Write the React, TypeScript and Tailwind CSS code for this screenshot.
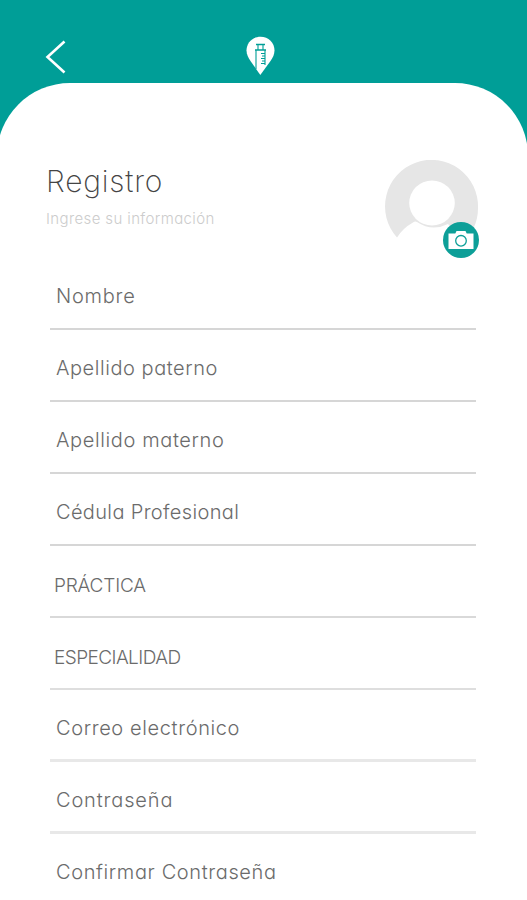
import clsx from "clsx";

type Field = {
  label: string;
  text: string;
  line: string;
};

const fields: Field[] = [
  { label: "Nombre", text: "pl-1.5 pt-[5px] text-[20px] tracking-[0.75px]", line: "border-b-2 border-[#d6d6d6]" },
  { label: "Apellido paterno", text: "pl-1.5 pt-[5px] text-[20px] tracking-[0.55px]", line: "border-b-2 border-[#d6d6d6]" },
  { label: "Apellido materno", text: "pl-1.5 pt-[5px] text-[20px] tracking-[0.62px]", line: "border-b-2 border-[#d6d6d6]" },
  { label: "Cédula Profesional", text: "pl-1.5 pt-[5px] text-[20px] tracking-[0.35px]", line: "border-b-2 border-[#d6d6d6]" },
  { label: "PRÁCTICA", text: "pl-1 pt-[9px] text-[19px] tracking-[-0.2px]", line: "border-b-2 border-[#d9d9d9]" },
  { label: "ESPECIALIDAD", text: "pl-1 pt-[9px] text-[19px] tracking-[-0.58px]", line: "border-b-2 border-[#dedede]" },
  { label: "Correo electrónico", text: "pl-1.5 pt-[7px] text-[20px] tracking-[0.62px]", line: "border-b-3 border-[#e8e8e8]" },
  { label: "Contraseña", text: "pl-1.5 pt-[7px] text-[20px] tracking-[0.85px]", line: "border-b-3 border-[#e8e8e8]" },
  { label: "Confirmar Contraseña", text: "pl-1.5 pt-[7px] text-[20px] tracking-[0.62px]", line: "border-b-3 border-transparent" },
];

function BackIcon() {
  return (
    <svg className="w-6 h-9" viewBox="0 0 24 36" fill="none" stroke="white" strokeWidth="2.6">
      <path d="M20.500 2.500 3.500 18l17 15.500" />
    </svg>
  );
}

function PinLogo() {
  return (
    <svg className="w-[30px] h-10" viewBox="0 0 30 40" fill="none">
      <path d="M15.500 .8C7.500 .8 1.500 6.800 1.500 14.500c0 4 1.800 7 4 10.500L15.300 39 25.500 25c2.300-3.500 4-6.500 4-10.500C29.500 6.800 23.500 .8 15.500 .8Z" fill="white" />
      <g stroke="#009e97">
        <path d="M11 8.500h9M10 14h11" strokeWidth="1.300" />
        <path d="M13 9v5M18 9v5M11 14v19M20 14v15" strokeWidth="1.100" />
        <path d="M16 17.500h4M17 20h3M16 22.500h4M17 25h3M16 27.500h4" strokeWidth="1" />
      </g>
    </svg>
  );
}

function Avatar() {
  return (
    <div className="relative w-24 h-[100px]">
      <svg className="w-24 h-[100px]" viewBox="0 0 96 100">
        <path
          d="M13 77.500A46.500 46.500 0 1 1 94 48c0 15-6 26-16 34L64 64q-16 8-31-2-2-1-4 .5Q19 68 13 77.500Z"
          fill="#e6e6e6"
        />
        <ellipse cx="48" cy="43" rx="22.800" ry="22.500" fill="white" />
      </svg>
      <button className="absolute left-[58.500px] top-[62px] w-9 h-9 rounded-full bg-[#0d9f98] flex items-center justify-center">
        <svg className="w-[26px] h-5" viewBox="0 0 26 20" fill="none">
          <path d="M.5 3.500h6.800l1.200-2.500h9l1.200 2.500h6.800v15.500H.5Z" fill="white" />
          <circle cx="13" cy="10.800" r="5.300" stroke="#0d9f98" strokeWidth="1.300" />
        </svg>
      </button>
    </div>
  );
}

function FieldRow({ field }: { field: Field }) {
  return (
    <label className={clsx("flex items-center h-[72px]", field.text, field.line)}>
      <span className="whitespace-nowrap leading-6 font-light text-[#6b6b6b]">{field.label}</span>
    </label>
  );
}

export default function App() {
  return (
    <div className="h-[900px] overflow-hidden bg-[#009e97] font-['Inter',sans-serif] [font-feature-settings:'cv11']">
      <header className="grid grid-cols-3 h-[83px] pt-9">
        <button className="w-fit h-fit pl-[43.500px] pt-[2.500px]">
          <BackIcon />
        </button>
        <div className="flex justify-center items-start pr-[6px]">
          <PinLogo />
        </div>
      </header>

      <main className="-ml-[3px] -mr-px h-[817px] rounded-t-[73px] bg-white pl-[49px] pr-[48px]">
        <div className="flex justify-between h-[175px] pt-[77px]">
          <div>
            <h1 className="mt-px text-[30px] leading-10 font-extralight tracking-[0.8px] text-[#444]">Registro</h1>
            <p className="mt-2 text-[15px] leading-5 font-light tracking-[0.38px] text-[#ccc]">
              Ingrese su información
            </p>
          </div>
          <Avatar />
        </div>
        <form className="ml-1 mr-1">
          {fields.map((field) => (
            <FieldRow key={field.label} field={field} />
          ))}
        </form>
      </main>
    </div>
  );
}
